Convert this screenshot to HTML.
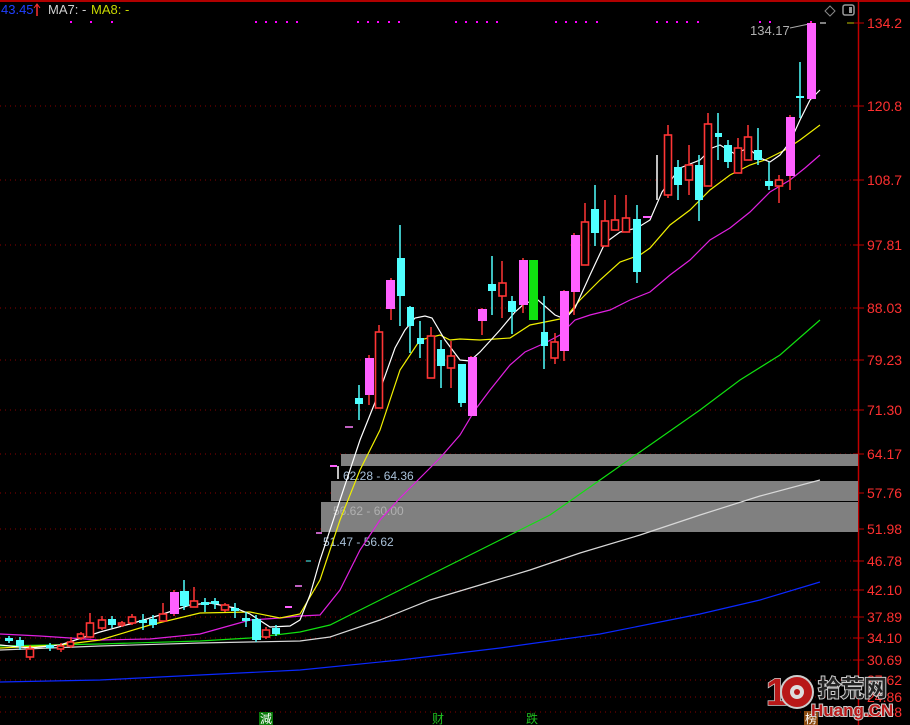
<!DOCTYPE html>
<html><head><meta charset="utf-8"><style>
html,body{margin:0;padding:0;background:#000;width:910px;height:725px;overflow:hidden}
svg{display:block}
text{font-family:"Liberation Sans","Noto Sans CJK SC",sans-serif}
</style></head><body>
<svg width="910" height="725" viewBox="0 0 910 725" xmlns="http://www.w3.org/2000/svg">
<rect width="910" height="725" fill="#000"/>
<rect x="0" y="0" width="910" height="2" fill="#b00000"/>
<line x1="858.5" y1="0" x2="858.5" y2="725" stroke="#c00000" stroke-width="1.5"/>
<g stroke="#8a0000" stroke-dasharray="1,4" stroke-width="1">
<line x1="0" y1="106" x2="858" y2="106"/><line x1="0" y1="180" x2="858" y2="180"/>
<line x1="0" y1="245" x2="858" y2="245"/><line x1="0" y1="308" x2="858" y2="308"/>
<line x1="0" y1="360" x2="858" y2="360"/><line x1="0" y1="410" x2="858" y2="410"/>
<line x1="0" y1="454" x2="858" y2="454"/><line x1="0" y1="493" x2="858" y2="493"/>
<line x1="0" y1="529" x2="858" y2="529"/><line x1="0" y1="561" x2="858" y2="561"/>
<line x1="0" y1="590" x2="858" y2="590"/><line x1="0" y1="617" x2="858" y2="617"/>
<line x1="0" y1="638" x2="858" y2="638"/><line x1="0" y1="660" x2="858" y2="660"/>
<line x1="0" y1="680" x2="858" y2="680"/><line x1="0" y1="697" x2="858" y2="697"/>
<line x1="0" y1="712" x2="858" y2="712"/>
</g>
<g stroke="#c00000"><line x1="853" y1="23" x2="864" y2="23"/><line x1="853" y1="106" x2="864" y2="106"/><line x1="853" y1="180" x2="864" y2="180"/><line x1="853" y1="245" x2="864" y2="245"/><line x1="853" y1="308" x2="864" y2="308"/><line x1="853" y1="360" x2="864" y2="360"/><line x1="853" y1="410" x2="864" y2="410"/><line x1="853" y1="454" x2="864" y2="454"/><line x1="853" y1="493" x2="864" y2="493"/><line x1="853" y1="529" x2="864" y2="529"/><line x1="853" y1="561" x2="864" y2="561"/><line x1="853" y1="590" x2="864" y2="590"/><line x1="853" y1="617" x2="864" y2="617"/><line x1="853" y1="638" x2="864" y2="638"/><line x1="853" y1="660" x2="864" y2="660"/><line x1="853" y1="680" x2="864" y2="680"/><line x1="853" y1="697" x2="864" y2="697"/><line x1="853" y1="712" x2="864" y2="712"/></g>
<line x1="847" y1="23" x2="854" y2="23" stroke="#c0c000"/>
<g fill="#ff3030" font-size="14">
<text x="867" y="28">134.2</text><text x="867" y="111">120.8</text><text x="867" y="185">108.7</text><text x="867" y="250">97.81</text><text x="867" y="313">88.03</text><text x="867" y="365">79.23</text><text x="867" y="415">71.30</text><text x="867" y="459">64.17</text><text x="867" y="498">57.76</text><text x="867" y="534">51.98</text><text x="867" y="566">46.78</text><text x="867" y="595">42.10</text><text x="867" y="622">37.89</text><text x="867" y="643">34.10</text><text x="867" y="665">30.69</text><text x="867" y="685">27.62</text><text x="867" y="702">24.86</text><text x="867" y="717">22.38</text>
</g>
<!-- header -->
<text x="1" y="14" fill="#2040ff" font-size="13">43.45</text>
<line x1="37" y1="5" x2="37" y2="16" stroke="#ff3030" stroke-width="1.5"/><path d="M34,8 L37,4 L40,8" fill="none" stroke="#ff3030"/>
<text x="48" y="14" fill="#d0d0d0" font-size="13">MA7: -</text>
<text x="91" y="14" fill="#c8d800" font-size="13">MA8: -</text>
<g fill="#ff00ff">
<rect x="70" y="21" width="2" height="2"/><rect x="90" y="21" width="2" height="2"/><rect x="111" y="21" width="2" height="2"/>
<rect x="255" y="21" width="2" height="2"/><rect x="265" y="21" width="2" height="2"/><rect x="275" y="21" width="2" height="2"/><rect x="286" y="21" width="2" height="2"/><rect x="296" y="21" width="2" height="2"/>
<rect x="357" y="21" width="2" height="2"/><rect x="367" y="21" width="2" height="2"/><rect x="377" y="21" width="2" height="2"/><rect x="388" y="21" width="2" height="2"/><rect x="398" y="21" width="2" height="2"/>
<rect x="455" y="21" width="2" height="2"/><rect x="465" y="21" width="2" height="2"/><rect x="476" y="21" width="2" height="2"/><rect x="486" y="21" width="2" height="2"/><rect x="496" y="21" width="2" height="2"/>
<rect x="555" y="21" width="2" height="2"/><rect x="565" y="21" width="2" height="2"/><rect x="575" y="21" width="2" height="2"/><rect x="585" y="21" width="2" height="2"/><rect x="596" y="21" width="2" height="2"/>
<rect x="656" y="21" width="2" height="2"/><rect x="666" y="21" width="2" height="2"/><rect x="676" y="21" width="2" height="2"/><rect x="686" y="21" width="2" height="2"/><rect x="697" y="21" width="2" height="2"/>
<rect x="759" y="21" width="2" height="2"/><rect x="769" y="21" width="2" height="2"/><rect x="810" y="21" width="2" height="2"/>
</g>
<path d="M830,6 L835,11 L830,16 L825,11 Z" fill="none" stroke="#888"/>
<rect x="843" y="5" width="11" height="10" rx="2" fill="none" stroke="#999" stroke-width="1.5"/><rect x="849" y="7" width="3" height="6" fill="#999"/>
<text x="750" y="35" fill="#b0b0b0" font-size="13">134.17</text>
<line x1="790" y1="28" x2="809" y2="24" stroke="#aaa"/>
<line x1="820" y1="23" x2="826" y2="23" stroke="#fff"/>
<!-- gray boxes -->
<rect x="341" y="454" width="517" height="12" fill="#808080"/>
<rect x="331" y="481" width="527" height="20" fill="#808080"/>
<rect x="321" y="502" width="537" height="30" fill="#808080"/>
<line x1="321" y1="501.5" x2="858" y2="501.5" stroke="#000"/>
<text x="343" y="480" fill="#a8c0d8" font-size="12">62.28 - 64.36</text>
<text x="333" y="515" fill="#b0b0b0" font-size="12">56.62 - 60.00</text>
<text x="323" y="546" fill="#a8c0d8" font-size="12">51.47 - 56.62</text>
<!-- MAs -->
<g fill="none" stroke-width="1.2">
<polyline stroke="#0a28ff" points="0,682 100,680 200,675 300,670 400,660 500,648 600,634 700,614 760,600 820,582"/>
<polyline stroke="#d8d8d8" points="0,650 100,646 200,643 300,641 330,637 380,620 430,600 480,585 530,570 580,553 640,535 700,515 760,496 820,480"/>
<polyline stroke="#10e010" points="0,646 100,644 200,641 250,638 300,632 330,625 360,610 400,590 450,565 500,540 550,515 600,480 650,445 700,410 740,380 780,355 820,320"/>
<polyline stroke="#e020e0" points="0,634 40,636 100,640 150,639 200,634 250,620 280,618 300,616 320,615 340,590 360,550 380,520 400,498 420,478 440,458 460,435 475,410 490,390 510,365 525,352 545,343 560,335 575,320 590,315 610,310 630,300 650,292 670,275 690,260 710,240 730,228 750,212 770,192 790,180 805,168 820,155"/>
<polyline stroke="#f0f000" points="0,648 60,645 100,640 150,625 200,613 250,612 280,618 300,614 320,580 340,520 360,470 380,430 400,370 420,340 440,335 450,340 460,339 480,340 510,338 530,325 545,322 555,320 565,318 580,300 600,280 620,262 640,255 650,248 670,225 690,210 710,190 730,175 750,165 765,160 785,150 800,140 820,125"/>
<polyline stroke="#ffffff" points="0,645 30,648 60,645 100,632 130,624 160,615 190,605 210,603 235,608 250,614 270,627 290,626 300,620 310,595 320,560 340,500 360,440 380,390 395,348 405,330 415,318 425,316 432,318 445,340 460,360 470,361 480,352 500,330 515,312 525,303 538,300 555,315 565,319 575,308 590,275 605,243 620,232 637,228 650,220 662,192 680,168 700,160 712,148 720,145 735,154 748,148 760,158 770,162 780,155 790,142 800,120 810,100 820,90"/>
</g>
<!-- candles: wicks -->
<g stroke-width="1.5">
<g stroke="#50ffff">
<line x1="9" y1="636" x2="9" y2="643"/><line x1="20" y1="637" x2="20" y2="650"/><line x1="50" y1="643" x2="50" y2="651"/><line x1="112" y1="616" x2="112" y2="628"/><line x1="143" y1="614" x2="143" y2="630"/><line x1="153" y1="615" x2="153" y2="628"/><line x1="184" y1="580" x2="184" y2="610"/><line x1="205" y1="598" x2="205" y2="612"/><line x1="215" y1="598" x2="215" y2="609"/><line x1="235" y1="603" x2="235" y2="618"/><line x1="246" y1="612" x2="246" y2="627"/><line x1="256" y1="615" x2="256" y2="642"/><line x1="276" y1="625" x2="276" y2="636"/>
<line x1="359" y1="385" x2="359" y2="420"/><line x1="400" y1="225" x2="400" y2="326"/><line x1="410" y1="306" x2="410" y2="353"/><line x1="420" y1="321" x2="420" y2="358"/><line x1="441" y1="340" x2="441" y2="388"/><line x1="461" y1="364" x2="461" y2="407"/><line x1="492" y1="256" x2="492" y2="315"/><line x1="512" y1="296" x2="512" y2="334"/><line x1="544" y1="296" x2="544" y2="369"/><line x1="595" y1="185" x2="595" y2="246"/><line x1="637" y1="205" x2="637" y2="283"/><line x1="678" y1="160" x2="678" y2="200"/><line x1="699" y1="155" x2="699" y2="221"/><line x1="718" y1="113" x2="718" y2="160"/><line x1="728" y1="140" x2="728" y2="168"/><line x1="758" y1="128" x2="758" y2="165"/><line x1="769" y1="162" x2="769" y2="190"/><line x1="800" y1="62" x2="800" y2="118"/>
</g>
<g stroke="#ff3535">
<line x1="30" y1="645" x2="30" y2="660"/><line x1="61" y1="643" x2="61" y2="652"/><line x1="71" y1="637" x2="71" y2="648"/><line x1="81" y1="632" x2="81" y2="640"/><line x1="90" y1="613" x2="90" y2="637"/><line x1="102" y1="616" x2="102" y2="630"/><line x1="122" y1="621" x2="122" y2="627"/><line x1="132" y1="614" x2="132" y2="625"/><line x1="163" y1="603" x2="163" y2="621"/><line x1="174" y1="590" x2="174" y2="616"/><line x1="194" y1="587" x2="194" y2="607"/><line x1="225" y1="603" x2="225" y2="612"/><line x1="266" y1="627" x2="266" y2="639"/>
<line x1="369" y1="355" x2="369" y2="405"/><line x1="379" y1="325" x2="379" y2="408"/><line x1="391" y1="278" x2="391" y2="320"/><line x1="431" y1="327" x2="431" y2="378"/><line x1="451" y1="341" x2="451" y2="388"/><line x1="471" y1="356" x2="471" y2="416"/><line x1="482" y1="308" x2="482" y2="335"/><line x1="502" y1="261" x2="502" y2="318"/><line x1="523" y1="258" x2="523" y2="313"/><line x1="555" y1="333" x2="555" y2="364"/><line x1="564" y1="290" x2="564" y2="361"/><line x1="574" y1="233" x2="574" y2="315"/><line x1="585" y1="203" x2="585" y2="265"/><line x1="605" y1="200" x2="605" y2="246"/><line x1="615" y1="195" x2="615" y2="230"/><line x1="626" y1="195" x2="626" y2="232"/><line x1="668" y1="125" x2="668" y2="198"/><line x1="689" y1="145" x2="689" y2="195"/><line x1="708" y1="113" x2="708" y2="186"/><line x1="738" y1="138" x2="738" y2="173"/><line x1="748" y1="125" x2="748" y2="160"/><line x1="779" y1="175" x2="779" y2="203"/><line x1="790" y1="115" x2="790" y2="190"/><line x1="811" y1="22" x2="811" y2="99"/>
</g>
<line x1="657" y1="155" x2="657" y2="200" stroke="#fff"/>
<line x1="338" y1="466" x2="338" y2="479" stroke="#fff"/>
</g>
<!-- cyan bodies -->
<g fill="#50ffff">
<rect x="5" y="638" width="8" height="3"/><rect x="16" y="640" width="8" height="6"/><rect x="46" y="645" width="8" height="3"/><rect x="108" y="619" width="8" height="6"/><rect x="139" y="620" width="8" height="3"/><rect x="149" y="619" width="8" height="6"/><rect x="180" y="591" width="9" height="15"/><rect x="201" y="602" width="8" height="3"/><rect x="211" y="601" width="8" height="3"/><rect x="231" y="608" width="8" height="3"/><rect x="242" y="618" width="8" height="3"/><rect x="252" y="619" width="9" height="21"/><rect x="272" y="628" width="8" height="6"/>
<rect x="355" y="398" width="8" height="6"/><rect x="397" y="258" width="8" height="38"/><rect x="407" y="307" width="7" height="19"/><rect x="417" y="338" width="7" height="6"/><rect x="437" y="349" width="8" height="17"/><rect x="458" y="364" width="8" height="39"/><rect x="488" y="284" width="8" height="7"/><rect x="508" y="301" width="8" height="11"/><rect x="541" y="332" width="7" height="14"/><rect x="591" y="209" width="8" height="24"/><rect x="633" y="219" width="8" height="53"/><rect x="674" y="167" width="8" height="18"/><rect x="695" y="165" width="8" height="35"/><rect x="715" y="133" width="7" height="4"/><rect x="724" y="145" width="8" height="17"/><rect x="754" y="150" width="8" height="10"/><rect x="765" y="181" width="8" height="5"/><rect x="796" y="96" width="8" height="2"/>
</g>
<!-- magenta / green filled -->
<g fill="#ff60ff">
<rect x="170" y="592" width="9" height="22"/><rect x="365" y="358" width="9" height="37"/><rect x="386" y="280" width="9" height="29"/><rect x="468" y="357" width="9" height="59"/><rect x="478" y="309" width="9" height="12"/><rect x="519" y="260" width="9" height="45"/><rect x="560" y="291" width="9" height="60"/><rect x="571" y="235" width="9" height="57"/><rect x="786" y="117" width="9" height="59"/><rect x="807" y="23" width="9" height="76"/>
<rect x="285" y="606" width="7" height="2"/><rect x="330" y="465" width="7" height="2"/><rect x="643" y="216" width="8" height="2"/>
</g>
<rect x="529" y="260" width="9" height="60" fill="#10e010"/>
<!-- red hollow bodies -->
<g fill="#000" stroke="#ff3535" stroke-width="1.6">
<rect x="26.5" y="649" width="7" height="8"/><rect x="57.5" y="646" width="6" height="3"/><rect x="67.5" y="642" width="6" height="4"/><rect x="77.5" y="634" width="6" height="4"/><rect x="86.5" y="623" width="7" height="14"/><rect x="98.5" y="620" width="7" height="8"/><rect x="118.5" y="623" width="6" height="2"/><rect x="128.5" y="617" width="7" height="6"/><rect x="159.5" y="614" width="7" height="7"/><rect x="190.5" y="601" width="7" height="6"/><rect x="221.5" y="605" width="7" height="5"/><rect x="262.5" y="630" width="7" height="7"/>
<rect x="375.5" y="332" width="7" height="76"/><rect x="427.5" y="336" width="7" height="42"/><rect x="447.5" y="356" width="7" height="12"/><rect x="499" y="283" width="7" height="13"/><rect x="551" y="342" width="7" height="16"/><rect x="581.5" y="222" width="7" height="43"/><rect x="601.5" y="221" width="7" height="25"/><rect x="611.5" y="220" width="7" height="10"/><rect x="622.5" y="218" width="7" height="14"/><rect x="664.5" y="135" width="7" height="60"/><rect x="685.5" y="165" width="7" height="15"/><rect x="704.5" y="124" width="7" height="62"/><rect x="734.5" y="148" width="7" height="25"/><rect x="744.5" y="137" width="7" height="23"/><rect x="775.5" y="180" width="7" height="6"/>
</g>
<g stroke="#ff80ff" stroke-width="1.5"><line x1="295" y1="586" x2="302" y2="586"/><line x1="316" y1="533" x2="322" y2="533"/><line x1="345" y1="427" x2="353" y2="427"/></g>
<line x1="306" y1="561" x2="311" y2="561" stroke="#50ffff"/>
<!-- bottom labels -->
<rect x="259" y="712" width="14" height="13" fill="#0a7a0a"/>
<text x="260" y="723" fill="#fff" font-size="12">減</text>
<text x="432" y="723" fill="#20c020" font-size="12">财</text>
<text x="526" y="723" fill="#20c020" font-size="12">跌</text>
<rect x="804" y="711" width="14" height="14" fill="#8a4a10"/>
<text x="805" y="723" fill="#fff" font-size="12">榜</text>
<!-- watermark -->
<text x="766" y="705" fill="#b81818" stroke="#ccc" stroke-width="1.5" font-size="38" font-weight="bold" paint-order="stroke">1</text>
<circle cx="797" cy="692" r="16" fill="#b81818" stroke="#ccc" stroke-width="2"/>
<circle cx="797" cy="692" r="7" fill="#ddd"/><circle cx="797" cy="692" r="3" fill="#b81818"/>
<text x="818" y="696" fill="#222" stroke="#ccc" stroke-width="2" paint-order="stroke" font-size="23" font-weight="bold">拾荒网</text>
<text x="811" y="716" fill="#b81818" stroke="#ccc" stroke-width="2" paint-order="stroke" font-size="17" font-weight="bold">Huang.CN</text>
</svg>
</body></html>
